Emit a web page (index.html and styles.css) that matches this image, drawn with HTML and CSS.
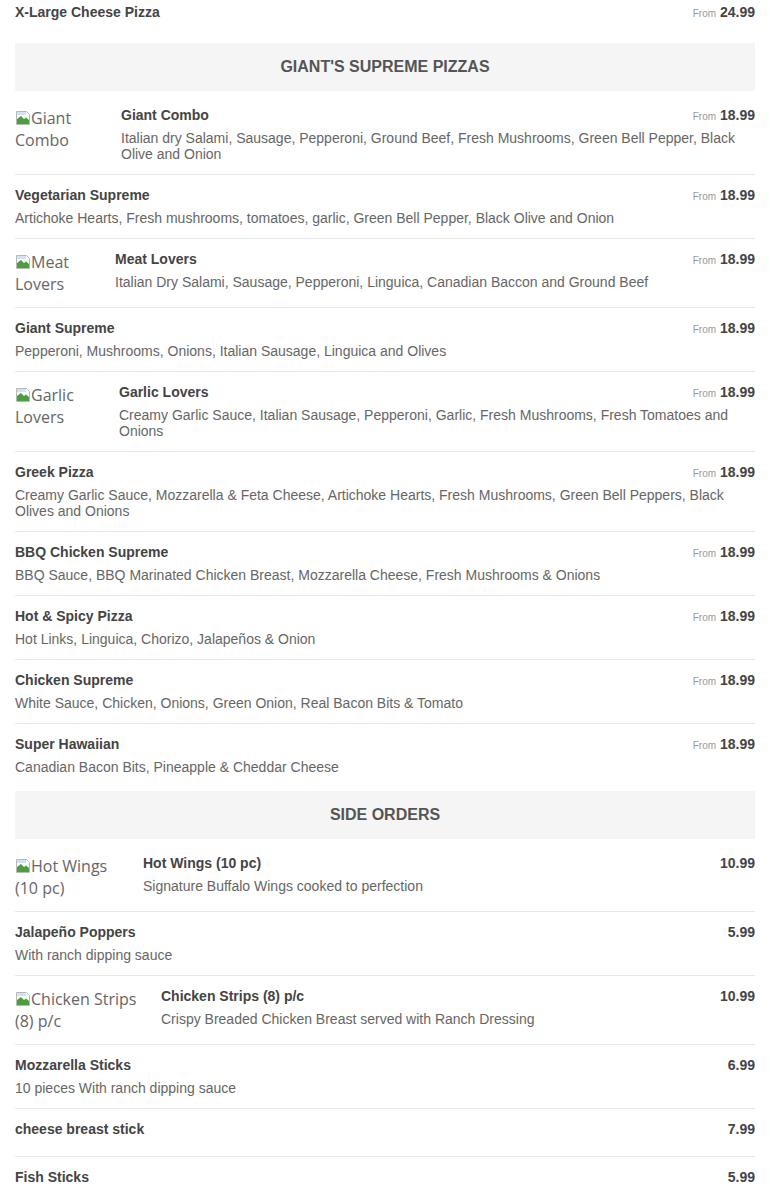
FILE: index.html
```html
<!DOCTYPE html>
<html>
<head>
<meta charset="utf-8">
<link rel="stylesheet" href="styles.css">
</head>
<body>
<div class="menu">
  <div class="item last">
    <div class="body">
      <div class="head"><span class="name">X-Large Cheese Pizza</span><span class="price"><small>From</small> 24.99</span></div>
      <div class="desc"></div>
    </div>
  </div>

  <h2 class="section">GIANT'S SUPREME PIZZAS</h2>

  <div class="item">
    <div class="thumb w91"><svg class="broken" viewBox="0 0 16 16"><path d="M1.5 1.5h10l3 3v10h-13z" fill="#fff" stroke="#b9b9b9"/><path d="M2 9l4-3 3 3 2-1.5 3 2.5v4H2z" fill="#4a9e3c"/><path d="M2 2h9v3H2z" fill="#cfe3f5"/></svg>Giant Combo</div>
    <div class="body">
      <div class="head"><span class="name">Giant Combo</span><span class="price"><small>From</small> 18.99</span></div>
      <div class="desc">Italian dry Salami, Sausage, Pepperoni, Ground Beef, Fresh Mushrooms, Green Bell Pepper, Black Olive and Onion</div>
    </div>
  </div>

  <div class="item">
    <div class="body">
      <div class="head"><span class="name">Vegetarian Supreme</span><span class="price"><small>From</small> 18.99</span></div>
      <div class="desc">Artichoke Hearts, Fresh mushrooms, tomatoes, garlic, Green Bell Pepper, Black Olive and Onion</div>
    </div>
  </div>

  <div class="item">
    <div class="thumb w85"><svg class="broken" viewBox="0 0 16 16"><path d="M1.5 1.5h10l3 3v10h-13z" fill="#fff" stroke="#b9b9b9"/><path d="M2 9l4-3 3 3 2-1.5 3 2.5v4H2z" fill="#4a9e3c"/><path d="M2 2h9v3H2z" fill="#cfe3f5"/></svg>Meat Lovers</div>
    <div class="body">
      <div class="head"><span class="name">Meat Lovers</span><span class="price"><small>From</small> 18.99</span></div>
      <div class="desc">Italian Dry Salami, Sausage, Pepperoni, Linguica, Canadian Baccon and Ground Beef</div>
    </div>
  </div>

  <div class="item">
    <div class="body">
      <div class="head"><span class="name">Giant Supreme</span><span class="price"><small>From</small> 18.99</span></div>
      <div class="desc">Pepperoni, Mushrooms, Onions, Italian Sausage, Linguica and Olives</div>
    </div>
  </div>

  <div class="item">
    <div class="thumb w89"><svg class="broken" viewBox="0 0 16 16"><path d="M1.5 1.5h10l3 3v10h-13z" fill="#fff" stroke="#b9b9b9"/><path d="M2 9l4-3 3 3 2-1.5 3 2.5v4H2z" fill="#4a9e3c"/><path d="M2 2h9v3H2z" fill="#cfe3f5"/></svg>Garlic Lovers</div>
    <div class="body">
      <div class="head"><span class="name">Garlic Lovers</span><span class="price"><small>From</small> 18.99</span></div>
      <div class="desc">Creamy Garlic Sauce, Italian Sausage, Pepperoni, Garlic, Fresh Mushrooms, Fresh Tomatoes and Onions</div>
    </div>
  </div>

  <div class="item">
    <div class="body">
      <div class="head"><span class="name">Greek Pizza</span><span class="price"><small>From</small> 18.99</span></div>
      <div class="desc">Creamy Garlic Sauce, Mozzarella &amp; Feta Cheese, Artichoke Hearts, Fresh Mushrooms, Green Bell Peppers, Black Olives and Onions</div>
    </div>
  </div>

  <div class="item">
    <div class="body">
      <div class="head"><span class="name">BBQ Chicken Supreme</span><span class="price"><small>From</small> 18.99</span></div>
      <div class="desc">BBQ Sauce, BBQ Marinated Chicken Breast, Mozzarella Cheese, Fresh Mushrooms &amp; Onions</div>
    </div>
  </div>

  <div class="item">
    <div class="body">
      <div class="head"><span class="name">Hot &amp; Spicy Pizza</span><span class="price"><small>From</small> 18.99</span></div>
      <div class="desc">Hot Links, Linguica, Chorizo, Jalapeños &amp; Onion</div>
    </div>
  </div>

  <div class="item">
    <div class="body">
      <div class="head"><span class="name">Chicken Supreme</span><span class="price"><small>From</small> 18.99</span></div>
      <div class="desc">White Sauce, Chicken, Onions, Green Onion, Real Bacon Bits &amp; Tomato</div>
    </div>
  </div>

  <div class="item last">
    <div class="body">
      <div class="head"><span class="name">Super Hawaiian</span><span class="price"><small>From</small> 18.99</span></div>
      <div class="desc">Canadian Bacon Bits, Pineapple &amp; Cheddar Cheese</div>
    </div>
  </div>

  <h2 class="section">SIDE ORDERS</h2>

  <div class="item">
    <div class="thumb w113"><svg class="broken" viewBox="0 0 16 16"><path d="M1.5 1.5h10l3 3v10h-13z" fill="#fff" stroke="#b9b9b9"/><path d="M2 9l4-3 3 3 2-1.5 3 2.5v4H2z" fill="#4a9e3c"/><path d="M2 2h9v3H2z" fill="#cfe3f5"/></svg>Hot Wings (10 pc)</div>
    <div class="body">
      <div class="head"><span class="name">Hot Wings (10 pc)</span><span class="price">10.99</span></div>
      <div class="desc">Signature Buffalo Wings cooked to perfection</div>
    </div>
  </div>

  <div class="item">
    <div class="body">
      <div class="head"><span class="name">Jalapeño Poppers</span><span class="price">5.99</span></div>
      <div class="desc">With ranch dipping sauce</div>
    </div>
  </div>

  <div class="item">
    <div class="thumb w131"><svg class="broken" viewBox="0 0 16 16"><path d="M1.5 1.5h10l3 3v10h-13z" fill="#fff" stroke="#b9b9b9"/><path d="M2 9l4-3 3 3 2-1.5 3 2.5v4H2z" fill="#4a9e3c"/><path d="M2 2h9v3H2z" fill="#cfe3f5"/></svg>Chicken Strips (8) p/c</div>
    <div class="body">
      <div class="head"><span class="name">Chicken Strips (8) p/c</span><span class="price">10.99</span></div>
      <div class="desc">Crispy Breaded Chicken Breast served with Ranch Dressing</div>
    </div>
  </div>

  <div class="item">
    <div class="body">
      <div class="head"><span class="name">Mozzarella Sticks</span><span class="price">6.99</span></div>
      <div class="desc">10 pieces With ranch dipping sauce</div>
    </div>
  </div>

  <div class="item">
    <div class="body">
      <div class="head"><span class="name">cheese breast stick</span><span class="price">7.99</span></div>
      <div class="desc"></div>
    </div>
  </div>

  <div class="item">
    <div class="body">
      <div class="head"><span class="name">Fish Sticks</span><span class="price">5.99</span></div>
      <div class="desc">Served with fries and tartar sauce</div>
    </div>
  </div>
</div>
</body>
</html>
```

FILE: styles.css
```css
html, body {
  margin: 0;
  padding: 0;
  background: #fff;
}

body {
  font-family: "Liberation Sans", Arial, sans-serif;
  color: #444;
}

.menu {
  padding: 0 15px;
  margin-top: -8px;
}

.item {
  display: flex;
  align-items: flex-start;
  gap: 15px;
  padding: 10px 0 12px;
  border-bottom: 1px solid #e8e8e8;
}

.item.last {
  border-bottom: none;
}

.body {
  flex: 1;
  min-width: 0;
}

.head {
  display: flex;
  justify-content: space-between;
  align-items: center;
  height: 20px;
}

.name {
  display: block;
  font-size: 14px;
  line-height: 20px;
  font-weight: bold;
  color: #444;
}

.price {
  display: block;
  font-size: 14px;
  line-height: 20px;
  font-weight: bold;
  color: #444;
  white-space: nowrap;
}

.price small {
  font-size: 10px;
  line-height: 1;
  font-weight: normal;
  color: #999;
}

.desc {
  margin-top: 5px;
  font-size: 14px;
  line-height: 16px;
  color: #666;
}

.thumb {
  flex: none;
  box-sizing: border-box;
  font-family: "Open Sans", sans-serif;
  font-size: 16px;
  line-height: 22px;
  color: #666;
  height: 46px;
  padding-top: 2px;
}

.thumb.w85 { width: 85px; }
.thumb.w89 { width: 89px; }
.thumb.w91 { width: 91px; }
.thumb.w113 { width: 113px; }
.thumb.w131 { width: 131px; }

.broken {
  width: 16px;
  height: 16px;
  vertical-align: -2px;
}

.section {
  margin: 4px 0;
  height: 48px;
  line-height: 48px;
  background: #f5f5f5;
  text-align: center;
  font-size: 16px;
  font-weight: bold;
  color: #555;
}
```
